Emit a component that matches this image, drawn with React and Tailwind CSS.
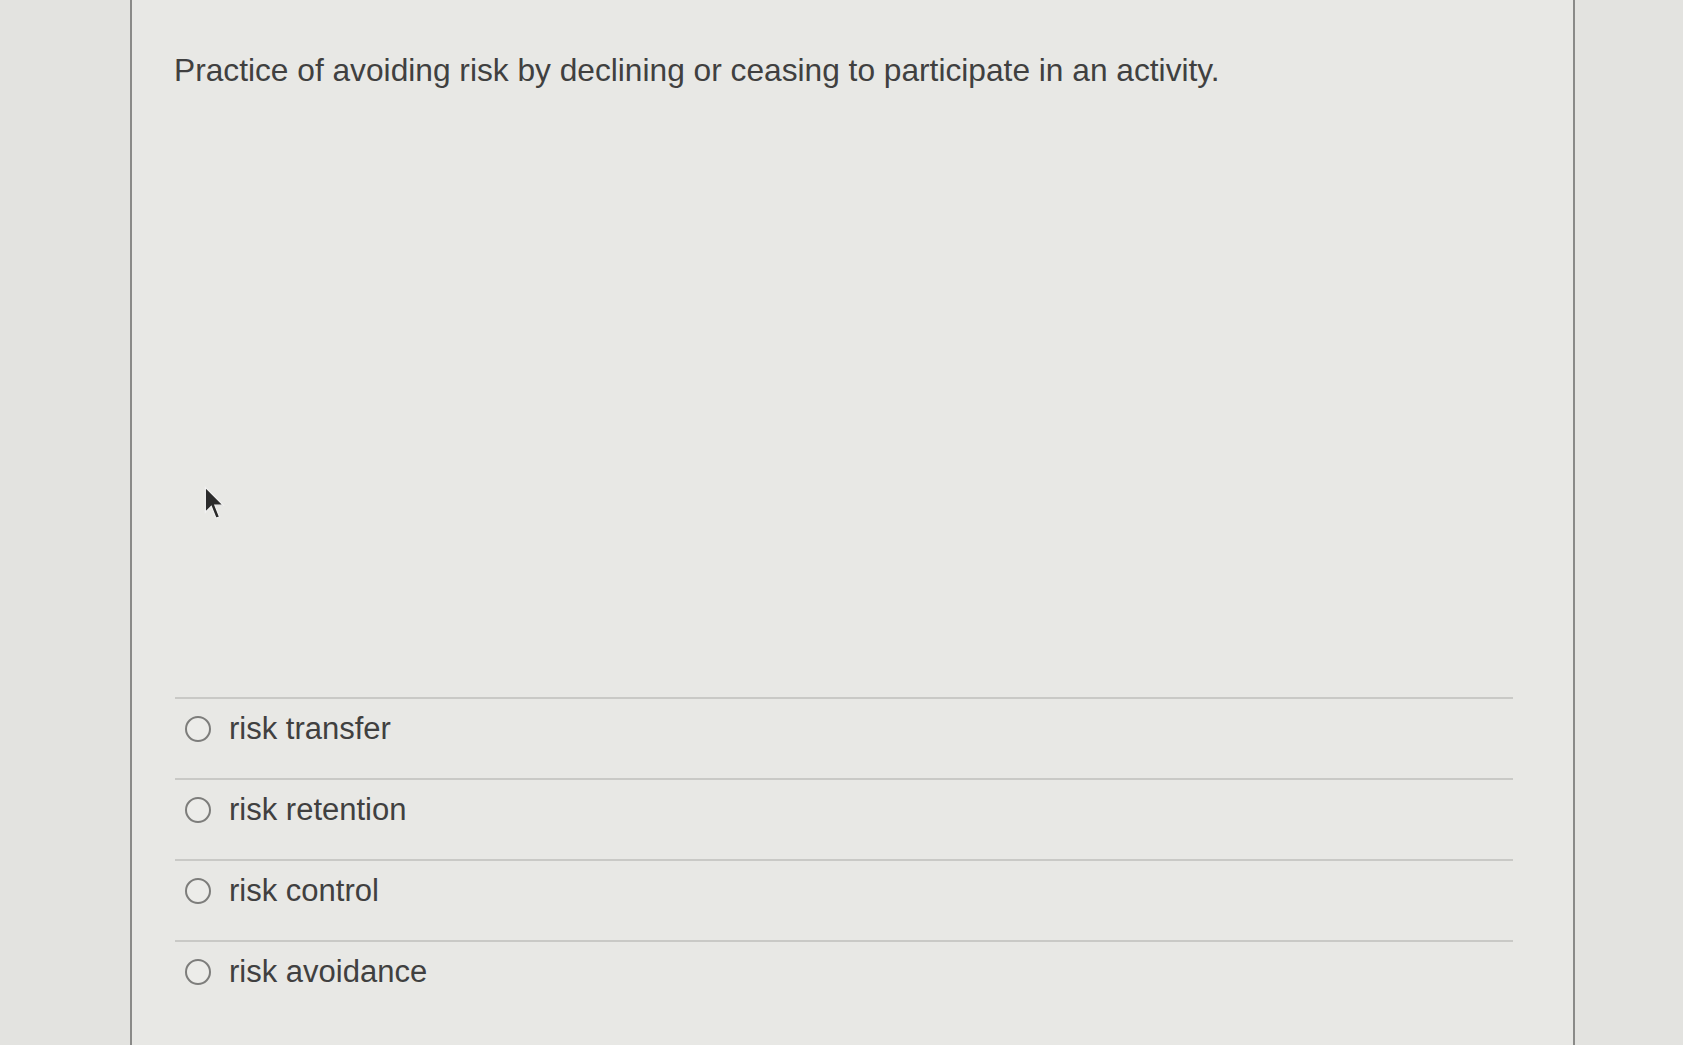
import React from 'react';

const options = ['risk transfer', 'risk retention', 'risk control', 'risk avoidance'];

function Cursor() {
  return (
    <svg width="26" height="36" viewBox="0 0 22 30" className="absolute left-[203px] top-[486px]">
      <path d="M2 1 L2 22 L7 17 L11 27 L14 26 L10 16 L17 16 Z" fill="#2b2b2b" stroke="#f2f2f2" strokeWidth="1" />
    </svg>
  );
}

export default function App() {
  return (
    <div className="relative w-[1683px] h-[1045px] overflow-hidden bg-[#e3e3e0] flex font-['Liberation_Sans',Arial,sans-serif]">
      <div className="w-[130px] shrink-0"></div>
      <div className="w-[1445px] shrink-0 h-full bg-[#e8e8e5] border-l-2 border-r-2 border-[#8a8a88] flex flex-col">
        <div className="pl-[42px] pt-[50px] text-[31.7px] leading-[40px] text-[#404040]">
          Practice of avoiding risk by declining or ceasing to participate in an activity.
        </div>
        <div className="mt-[607px] ml-[43px] mr-[60px] flex flex-col">
          {options.map((opt) => (
            <div key={opt} className="h-[81px] border-t-2 border-[#c9c9c6] pt-[12px] flex items-start">
              <div className="flex items-center h-[36px] pl-[10px] gap-[18px]">
                <span className="w-[26px] h-[26px] rounded-full border-2 border-[#7d7d7b] bg-[#ecece9]"></span>
                <span className="text-[31px] leading-[36px] text-[#404040]">{opt}</span>
              </div>
            </div>
          ))}
        </div>
      </div>
      <Cursor />
    </div>
  );
}
